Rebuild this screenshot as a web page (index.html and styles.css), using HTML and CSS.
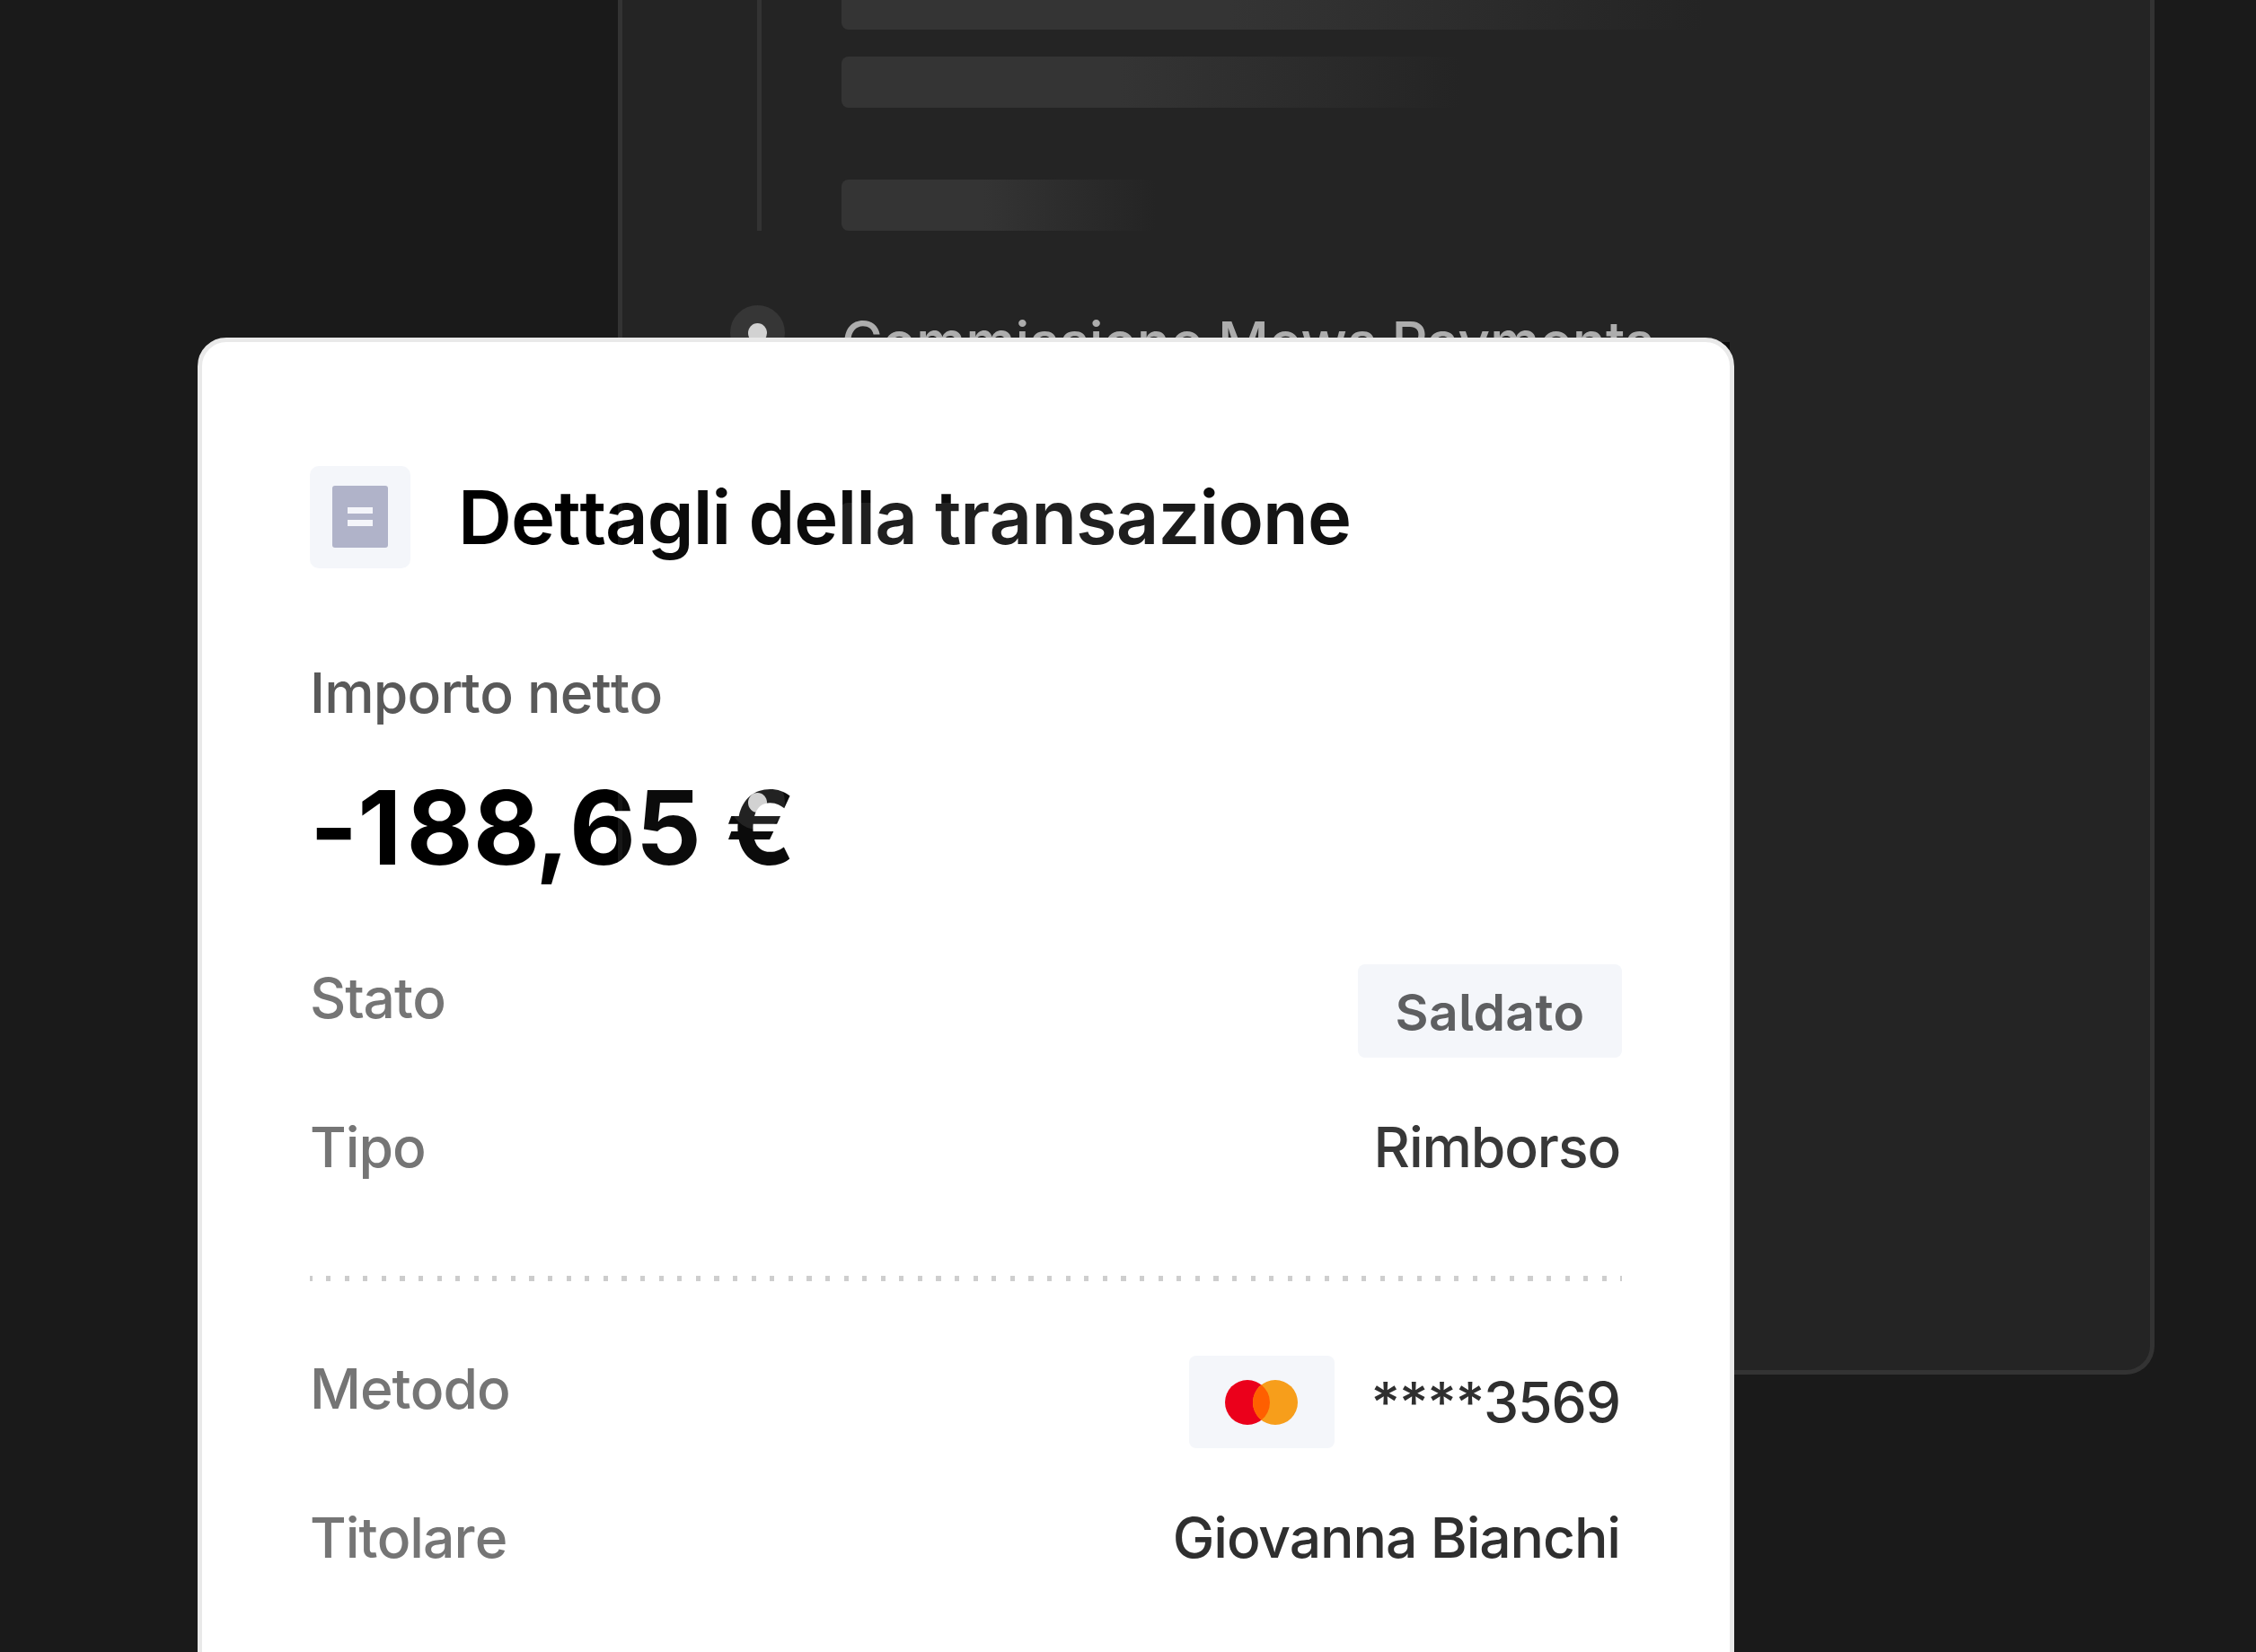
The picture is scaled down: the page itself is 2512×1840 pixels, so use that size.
FILE: index.html
```html
<!DOCTYPE html>
<html lang="it">
  <head>
    <meta charset="UTF-8" />
    <meta name="viewport" content="width=device-width, initial-scale=1.0" />
    <title>Dettagli della transazione</title>
    <link rel="stylesheet" href="styles.css">
  </head>
  <body>
    <main class="stage">
      <section class="panel">
        <div class="step">
          <div class="rail"><span class="line"></span></div>
          <div class="bars">
            <span class="bar bar-long"></span>
            <span class="bar bar-medium"></span>
            <span class="bar bar-short"></span>
          </div>
        </div>
        <div class="step">
          <div class="halo"><span class="dot"></span></div>
          <p class="step-title">Commissione Mews Payments</p>
        </div>
      </section>

      <section class="card">
        <header class="card-header">
          <div class="icon-tile">
            <svg width="62" height="69" viewBox="0 0 62 69">
              <rect width="62" height="69" rx="3" fill="#b0b3c9" />
              <rect x="17" y="24" width="28" height="7" fill="#f4f5fa" />
              <rect x="17" y="38" width="28" height="7" fill="#f4f5fa" />
            </svg>
          </div>
          <h1>Dettagli della transazione</h1>
        </header>

        <p class="amount-label">Importo netto</p>
        <p class="amount">-<span class="loose">1</span>8<span class="tight">8</span>,65 €</p>

        <div class="rows">
          <div class="row">
            <span class="label">Stato</span>
            <span class="badge">Saldato</span>
          </div>
          <div class="row">
            <span class="label">Tipo</span>
            <span class="value">Rimborso</span>
          </div>
        </div>

        <div class="divider"></div>

        <div class="rows">
          <div class="row">
            <span class="label">Metodo</span>
            <div class="method">
              <div class="brand">
                <svg width="81" height="50" viewBox="0 0 81 50">
                  <circle cx="25" cy="25" r="25" fill="#eb001b" />
                  <circle cx="56" cy="25" r="25" fill="#f79e1b" />
                  <path d="M40.5 5.4a25 25 0 0 1 0 39.2a25 25 0 0 1 0-39.2z" fill="#ff5f00" />
                </svg>
              </div>
              <span class="value">****3569</span>
            </div>
          </div>
          <div class="row">
            <span class="label">Titolare</span>
            <span class="value">Giovanna Bianchi</span>
          </div>
        </div>

        <!-- panel behind, faintly visible through the card's dark text -->
        <div class="see-through">
          <span class="see-through-bar"></span>
          <div class="see-through-halo"><span class="dot"></span></div>
        </div>
      </section>
    </main>
  </body>
</html>
```
FILE: styles.css
```css
* {
  box-sizing: border-box;
}
body {
  margin: 0;
  background-color: #1a1a1a;
  font-family: Inter, sans-serif;
}
h1,
p {
  margin: 0;
}
svg {
  display: block;
}
.stage {
  position: relative;
  height: 1840px;
  overflow: hidden;
}

/* dark timeline panel */
.panel {
  position: absolute;
  left: 688px;
  top: -40px;
  width: 1711px;
  height: 1571px;
  padding: 11px 120px;
  background-color: #242424;
  border: 5px solid #333;
  border-radius: 32px;
}
.step {
  display: flex;
  gap: 63px;
  margin-bottom: 83px;
}
.rail {
  width: 61px;
  padding-left: 30px;
  display: flex;
}
.line {
  width: 5px;
  background-color: #333;
}
.bars {
  display: flex;
  flex-direction: column;
}
.bar {
  height: 57px;
  border-radius: 8px;
  background: linear-gradient(to right, #343434 45%, #242424);
}
.bar-long {
  width: 960px;
}
.bar-medium {
  width: 690px;
  margin-top: 30px;
}
.bar-short {
  width: 350px;
  margin-top: 80px;
}
.halo {
  width: 61px;
  height: 61px;
  border-radius: 50%;
  background-color: #363636;
  display: flex;
  align-items: center;
  justify-content: center;
}
.dot {
  width: 21px;
  height: 22px;
  border-radius: 50%;
  background-color: #d2d2d2;
}
.step-title {
  padding-top: 1px;
  font-size: 62.4px;
  font-weight: 500;
  line-height: 80px;
  letter-spacing: -0.2px;
  color: #adadad;
  white-space: nowrap;
}

/* transaction card */
.card {
  position: absolute;
  z-index: 1;
  left: 220px;
  top: 376px;
  width: 1711px;
  height: 1520px;
  padding: 138px 120px 0;
  background-color: #fff;
  border: 5px solid #e9e9e9;
  border-radius: 32px;
}
.card-header {
  display: flex;
  align-items: center;
  gap: 53px;
}
.icon-tile {
  width: 112px;
  height: 114px;
  padding-bottom: 1px;
  border-radius: 10px;
  background-color: #f4f6fa;
  display: flex;
  align-items: center;
  justify-content: center;
}
h1 {
  font-size: 83px;
  font-weight: 600;
  line-height: 100px;
  letter-spacing: -0.9px;
  font-kerning: none;
  color: #000;
}
.amount-label {
  margin-top: 99px;
  font-size: 62.4px;
  font-weight: 500;
  line-height: 80px;
  letter-spacing: -0.8px;
  font-kerning: none;
  color: #595959;
}
.amount {
  margin-top: 40px;
  margin-bottom: 80px;
  font-size: 114px;
  font-weight: 700;
  line-height: 140px;
  font-kerning: none;
  color: #000;
}
.loose {
  letter-spacing: 5px;
}
.tight {
  letter-spacing: -5px;
}
.rows {
  display: flex;
  flex-direction: column;
  gap: 60px;
}
.row {
  display: flex;
  justify-content: space-between;
  align-items: flex-start;
  height: 106px;
}
.label,
.value {
  font-size: 62.4px;
  font-weight: 500;
  line-height: 80px;
  letter-spacing: -1px;
}
.label {
  font-kerning: none;
  color: #757575;
}
.value {
  padding-right: 2px;
  letter-spacing: -1.1px;
  color: #2f2f2f;
}
.badge {
  width: 294px;
  height: 104px;
  margin-top: 2px;
  padding-top: 2px;
  border-radius: 8px;
  background-color: #f4f6fa;
  color: #57585a;
  font-size: 57px;
  font-weight: 600;
  line-height: 104px;
  letter-spacing: 0.4px;
  font-feature-settings: "cv05";
  text-align: center;
}
.divider {
  height: 6px;
  margin: 77px 0 80px;
  background: repeating-linear-gradient(to right, #ccc 0 2.6px, transparent 2.6px 18px, #ccc 18px 20.59px);
}
.method {
  display: flex;
  align-items: center;
  gap: 41px;
  margin-top: 3px;
}
.brand {
  width: 162px;
  height: 103px;
  border-radius: 8px;
  background-color: #f4f6fa;
  display: flex;
  align-items: center;
  justify-content: center;
}

.see-through {
  position: absolute;
  left: 463px;
  right: 0;
  top: 0;
  height: 1150px;
  background-color: #0b0b0b;
  border-left: 5px solid #161616;
  mix-blend-mode: screen;
}
.see-through-bar {
  position: absolute;
  left: 243px;
  top: 179px;
  width: 640px;
  height: 57px;
  border-radius: 8px;
  background: linear-gradient(to right, #202020 45%, #0b0b0b);
}
.see-through-halo {
  position: absolute;
  left: 120px;
  top: 482px;
  width: 61px;
  height: 61px;
  border-radius: 50%;
  background-color: #222;
  display: flex;
  align-items: center;
  justify-content: center;
}
```
